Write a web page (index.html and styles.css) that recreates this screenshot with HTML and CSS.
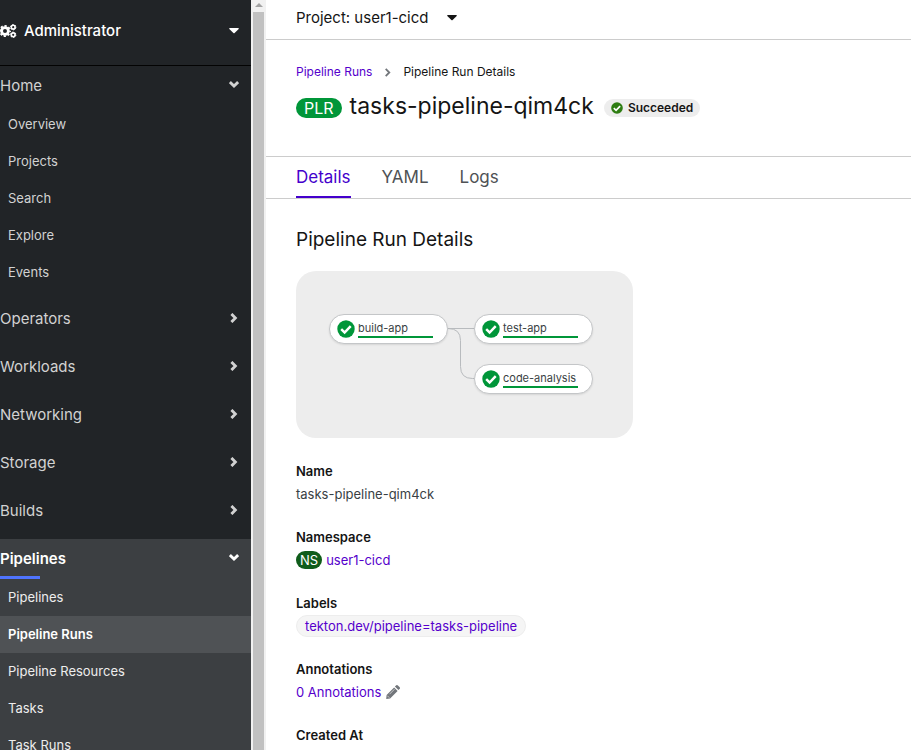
FILE: index.html
```
<!DOCTYPE html>
<html lang="en">
<head>
<meta charset="utf-8">
<meta name="viewport" content="width=device-width, initial-scale=1">
<title>tasks-pipeline-qim4ck · Pipeline Run Details</title>
<link rel="stylesheet" href="styles.css">
</head>
<body>
<svg class="defs" aria-hidden="true">
  <symbol id="down" viewBox="0 0 10 10"><path d="M.9 2.1l4.1 4 4.1-4" fill="none" stroke="currentColor" stroke-width="2.8"/></symbol>
  <symbol id="right" viewBox="0 0 10 10"><path d="M2.4.9l4 4.1-4 4.1" fill="none" stroke="currentColor" stroke-width="2.8"/></symbol>
  <symbol id="caret" viewBox="0 0 10 6"><path d="M.7 0h8.6a.6.6 0 0 1 .4 1L5.6 5.1a.9.9 0 0 1-1.2 0L.3 1A.6.6 0 0 1 .7 0z" fill="currentColor"/></symbol>
  <symbol id="check" viewBox="0 0 18 18"><circle cx="9" cy="9" r="8.7" fill="currentColor"/><path d="M4.2 9.2l3.4 3.3 6.1-6.4" fill="none" stroke="#fff" stroke-width="2.5"/></symbol>
</svg>
<div class="app">
  <nav class="sidebar" aria-label="Main">
    <button class="perspective" type="button">
      <svg class="cogs" viewBox="0 0 17 14" aria-hidden="true" fill="none" stroke="currentColor">
        <circle cx="5" cy="7" r="3.4" stroke-width="2.8"/>
        <circle cx="5" cy="7" r="5.1" stroke-width="1.8" stroke-dasharray="2.2 1.8" stroke-dashoffset="1.1"/>
        <circle cx="13.2" cy="3.2" r="1.9" stroke-width="1.6"/>
        <circle cx="13.2" cy="3.2" r="2.7" stroke-width="1" stroke-dasharray="1.5 1.33"/>
        <circle cx="13.2" cy="10.8" r="1.9" stroke-width="1.6"/>
        <circle cx="13.2" cy="10.8" r="2.7" stroke-width="1" stroke-dasharray="1.5 1.33"/>
      </svg>
      <span>Administrator</span>
      <svg class="caret" aria-hidden="true"><use href="#caret"/></svg>
    </button>
    <section class="group">
      <button class="group-head" type="button" aria-expanded="true">Home<svg class="chev" aria-hidden="true"><use href="#down"/></svg></button>
      <ul>
        <li><a href="#">Overview</a></li>
        <li><a href="#">Projects</a></li>
        <li><a href="#">Search</a></li>
        <li><a href="#">Explore</a></li>
        <li><a href="#">Events</a></li>
      </ul>
    </section>
    <section class="group"><button class="group-head" type="button" aria-expanded="false">Operators<svg class="chev" aria-hidden="true"><use href="#right"/></svg></button></section>
    <section class="group"><button class="group-head" type="button" aria-expanded="false">Workloads<svg class="chev" aria-hidden="true"><use href="#right"/></svg></button></section>
    <section class="group"><button class="group-head" type="button" aria-expanded="false">Networking<svg class="chev" aria-hidden="true"><use href="#right"/></svg></button></section>
    <section class="group"><button class="group-head" type="button" aria-expanded="false">Storage<svg class="chev" aria-hidden="true"><use href="#right"/></svg></button></section>
    <section class="group"><button class="group-head" type="button" aria-expanded="false">Builds<svg class="chev" aria-hidden="true"><use href="#right"/></svg></button></section>
    <section class="group active">
      <button class="group-head" type="button" aria-expanded="true">Pipelines<svg class="chev" aria-hidden="true"><use href="#down"/></svg></button>
      <ul>
        <li><a href="#">Pipelines</a></li>
        <li><a class="current" href="#" aria-current="page">Pipeline Runs</a></li>
        <li><a href="#">Pipeline Resources</a></li>
        <li><a href="#">Tasks</a></li>
        <li><a href="#">Task Runs</a></li>
      </ul>
    </section>
  </nav>
  <div class="scrollbar" aria-hidden="true"><span class="arrow"></span><span class="thumb"></span></div>
  <main class="main">
    <div class="project-bar">
      <button class="project" type="button">Project: user1-cicd<svg class="caret" aria-hidden="true"><use href="#caret"/></svg></button>
    </div>
    <header class="page-head">
      <nav class="crumbs" aria-label="Breadcrumb">
        <a href="#">Pipeline Runs</a>
        <svg class="crumb-sep" viewBox="0 0 10 10" aria-hidden="true"><path d="M3 1l4 4-4 4" fill="none" stroke="currentColor" stroke-width="2"/></svg>
        <span>Pipeline Run Details</span>
      </nav>
      <div class="title-row">
        <span class="badge badge-plr">PLR</span>
        <h1>tasks-pipeline-qim4ck</h1>
        <span class="status"><svg aria-hidden="true"><use href="#check"/></svg>Succeeded</span>
      </div>
    </header>
    <nav class="tabs" aria-label="Views">
      <a class="selected" href="#">Details</a>
      <a href="#">YAML</a>
      <a href="#">Logs</a>
    </nav>
    <div class="content">
      <h2>Pipeline Run Details</h2>
      <div class="graph">
        <svg class="edges" viewBox="0 0 337 167" aria-hidden="true" fill="none" stroke="#b8bbbe"><path d="M152 57.5h26M152 57.5q12.500 0 12.500 12v26q0 12 12 12h2"/></svg>
        <div class="node build"><svg aria-hidden="true"><use href="#check"/></svg><span>build-app</span></div>
        <div class="node test"><svg aria-hidden="true"><use href="#check"/></svg><span>test-app</span></div>
        <div class="node analysis"><svg aria-hidden="true"><use href="#check"/></svg><span>code-analysis</span></div>
      </div>
      <dl>
        <div><dt>Name</dt><dd>tasks-pipeline-qim4ck</dd></div>
        <div><dt>Namespace</dt><dd><span class="badge badge-ns">NS</span><a href="#">user1-cicd</a></dd></div>
        <div><dt>Labels</dt><dd><a class="label" href="#">tekton.dev/pipeline=tasks-pipeline</a></dd></div>
        <div><dt>Annotations</dt><dd><button class="annotations" type="button">0 Annotations<svg viewBox="0 0 14 14" aria-hidden="true"><path d="M8.1 2.4l3.5 3.5-7.5 7.5-3.9.5.4-4zM8.9 1.6L10 .5a1.3 1.3 0 0 1 1.9 0l1.6 1.6a1.3 1.3 0 0 1 0 1.900l-1.100 1.100z" fill="#72767b"/><path d="M1.300 10.700l2 2M3.500 9.200l5-5" stroke="#fff" stroke-width=".6"/></svg></button></dd></div>
        <div><dt>Created At</dt></div>
      </dl>
    </div>
  </main>
</div>
</body>
</html>
```
FILE: styles.css
```
* { box-sizing: border-box; }
body {
  margin: 0;
  font-family: Inter, "Liberation Sans", sans-serif;
  font-size: 14px;
  line-height: 20px;
  color: #151515;
  background: #fff;
}
button { font: inherit; color: inherit; background: none; border: 0; padding: 0; text-align: left; cursor: pointer; }
a { color: #50c; text-decoration: none; }
h1, h2, dl, dd, ul { margin: 0; padding: 0; font-weight: 400; }
ul { list-style: none; }
svg { flex: none; }
.defs { position: absolute; width: 0; height: 0; }
.app { display: flex; height: 100vh; overflow: hidden; }

.sidebar { flex: none; width: 251px; overflow: hidden; background: #212427; color: #d2d2d2; }
.perspective {
  display: flex;
  align-items: center;
  width: 100%;
  height: 66px;
  padding: 0 12px 4px 0;
  border-bottom: 1px solid #030303;
  color: #fff;
  font-size: 15px;
  font-weight: 500;
}
.cogs { width: 17px; height: 14px; margin-right: 7px; }
.caret { width: 10px; height: 6px; }
.perspective .caret { margin-left: auto; }
.group { margin-bottom: 8px; }
.group-head {
  position: relative;
  display: flex;
  align-items: center;
  justify-content: space-between;
  width: 100%;
  height: 40px;
  padding-right: 12px;
  font-size: 15px;
}
.chev { width: 10px; height: 10px; margin-bottom: 2px; }
.group li a { display: block; padding: 8px; line-height: 21px; font-size: 13px; color: #d2d2d2; }
.active { background: #3c3f42; }
.active .group-head { color: #fff; font-weight: 600; }
.active .group-head::after { content: ""; position: absolute; left: 0; bottom: 0; width: 40px; height: 3px; background: #4f74ff; }
.active li a { color: #ededed; }
.group li .current { background: #4f5255; color: #fff; font-weight: 600; }

.scrollbar { flex: none; display: flex; flex-direction: column; align-items: center; width: 15px; background: #f1f1f1; }
.arrow { margin: 3px 0 5px; border: 4px solid transparent; border-top: 0; border-bottom-color: #a3a3a3; }
.thumb { flex: 1; width: 11px; background: #c1c1c1; }

.main { flex: 1; min-width: 0; overflow: hidden; }
.project-bar { height: 40px; padding: 0 30px; border-bottom: 1px solid #ccc; }
.project { display: flex; align-items: center; gap: 18px; height: 36px; font-size: 15px; }
.page-head { padding: 22px 30px 32px; border-bottom: 1px solid #ccc; }
.crumbs { display: flex; align-items: center; gap: 11px; font-size: 12px; }
.crumb-sep { width: 9px; height: 9px; color: #72767b; }
.title-row { display: flex; align-items: center; height: 42px; padding-top: 10px; }
.badge { border-radius: 20px; color: #fff; }
.badge-plr { margin-right: 8px; padding: 0 8px; font-size: 16px; background: #009639; }
h1 { font-size: 23px; line-height: 28px; padding-bottom: 4px; }
.status { display: flex; align-items: center; gap: 5px; margin-left: 10px; padding: 0 7px; border-radius: 20px; background: #ededed; font-size: 12px; line-height: 18px; font-weight: 600; }
.status svg { width: 12px; height: 12px; color: #2e7d12; }
.tabs { display: flex; gap: 31px; height: 42px; padding: 0 30px; border-bottom: 1px solid #ccc; }
.tabs a { height: 41px; font-size: 17px; line-height: 40px; color: #4f5255; }
.tabs .selected { color: #40c; border-bottom: 2px solid #40c; }
.content { padding: 28px 30px; }
h2 { font-size: 19px; line-height: 26px; }
.graph { position: relative; width: 337px; height: 167px; margin: 18px 0 23px; border-radius: 20px; background: #ededed; }
.edges { display: block; width: 337px; height: 167px; }
.node { position: absolute; display: flex; align-items: flex-start; gap: 3px; width: 119px; height: 30px; padding: 5px 7px; border: 1px solid #c4c6c8; border-radius: 15px; background: #fff; box-shadow: 0 1px 2px rgba(0, 0, 0, .1); color: #393f44; font-size: 11px; line-height: 16px; }
.node svg { width: 18px; height: 18px; color: #009639; }
.node span { width: 75px; border-bottom: 2px solid #009639; }
.build { left: 33px; top: 43px; }
.test { left: 178px; top: 43px; }
.analysis { left: 178px; top: 93px; }

dl > div { margin-bottom: 20px; }
dt { font-size: 13px; line-height: 20px; font-weight: 600; }
dd { display: flex; align-items: center; min-height: 26px; font-size: 13px; color: #393f44; }
.badge-ns { margin-right: 4px; padding: 0 4px; line-height: 18px; background: #0f5c1a; }
.label { padding: 0 8px; border: 1px solid #ededed; border-radius: 20px; background: #f5f5f5; }
.annotations { display: flex; align-items: center; gap: 5px; color: #50c; }
.annotations svg { width: 14px; height: 14px; }
```
